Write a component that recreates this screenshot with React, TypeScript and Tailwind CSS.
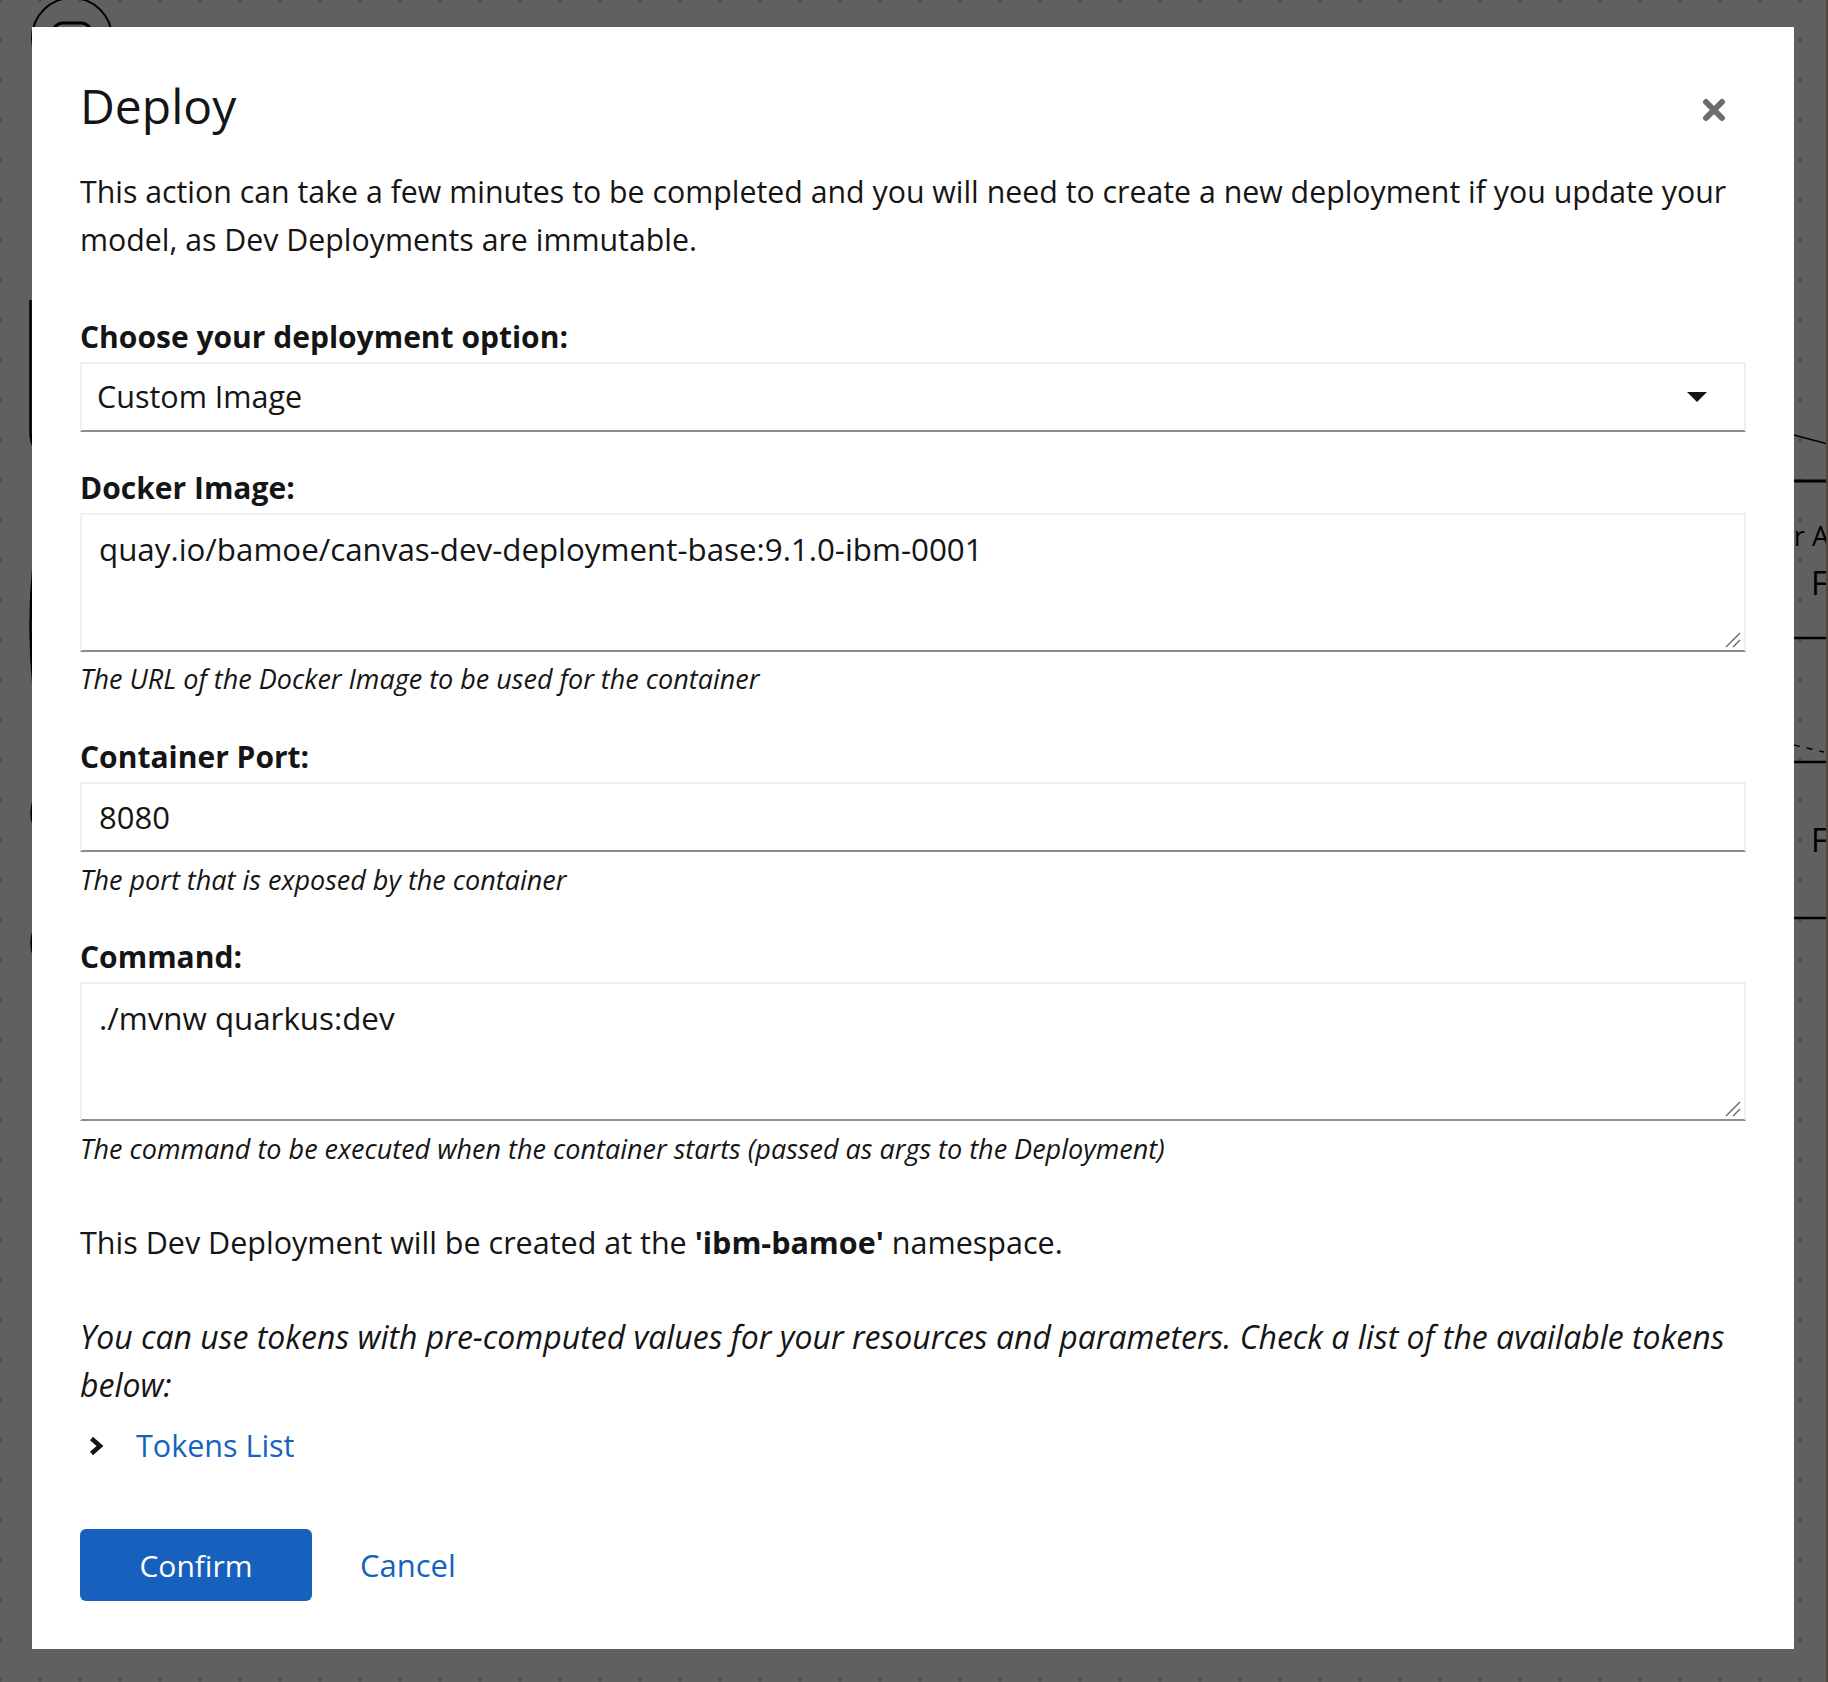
import React from "react";

const text = "text-[#151515]";

function Backdrop() {
  // diagram canvas that peeks out around the modal
  return (
    <svg className="absolute inset-0" width={1828} height={1682} viewBox="0 0 1828 1682">
      <circle cx={72} cy={38} r={40} fill="none" stroke="#000" strokeWidth={2} />
      <rect x={53} y={23} width={38} height={38} rx={10} fill="none" stroke="#000" strokeWidth={3} />
      <path d="M30.5 300 L30.5 430 Q30.5 442 34 447" fill="none" stroke="#000" strokeWidth={2.5} />
      <path d="M34 559 Q27 626 34 693" fill="none" stroke="#000" strokeWidth={2.5} />
      <path d="M34 800 Q29 813 34 826" fill="none" stroke="#000" strokeWidth={2.5} />
      <path d="M34 930 Q29 943 34 956" fill="none" stroke="#000" strokeWidth={2.5} />
      <line x1={1790} y1={434} x2={1828} y2={444} stroke="#000" strokeWidth={1.5} />
      <line x1={1790} y1={481} x2={1828} y2={481} stroke="#000" strokeWidth={3} />
      <text x={1829} y={546} textAnchor="end" fontSize={27} fontFamily="'Open Sans', sans-serif" fill="#000">
        Order A
      </text>
      <text x={1811} y={595} fontSize={32} fontFamily="'Open Sans', sans-serif" fill="#000">
        F
      </text>
      <line x1={1790} y1={638} x2={1828} y2={638} stroke="#000" strokeWidth={2.5} />
      <path d="M1794 745 L1824 752" fill="none" stroke="#000" strokeWidth={1.5} strokeDasharray="6 7" />
      <line x1={1790} y1={762} x2={1828} y2={762} stroke="#000" strokeWidth={2.5} />
      <text x={1811} y={852} fontSize={32} fontFamily="'Open Sans', sans-serif" fill="#000">
        F
      </text>
      <line x1={1790} y1={918} x2={1828} y2={918} stroke="#000" strokeWidth={2.5} />
      <rect x={1826} y={0} width={2} height={1682} fill="#54463a" />
    </svg>
  );
}

function Label({ children }: { children: React.ReactNode }) {
  return <div className={`h-[48px] leading-[48px] text-[30px] font-bold ${text}`}>{children}</div>;
}

function Helper({ children, mt = "mt-[7px]" }: { children: React.ReactNode; mt?: string }) {
  return <div className={`${mt} h-[42px] leading-[42px] text-[27px] italic ${text}`}>{children}</div>;
}

function Grip() {
  return (
    <svg className="absolute right-[3px] bottom-[2px]" width={16} height={16} viewBox="0 0 16 16">
      <line x1={1} y1={15} x2={15} y2={1} stroke="#6b6b6b" strokeWidth={1.5} />
      <line x1={8} y1={15} x2={15} y2={8} stroke="#6b6b6b" strokeWidth={1.5} />
    </svg>
  );
}

function TextArea({ value }: { value: string }) {
  return (
    <div className="relative mt-[1px] h-[139px] border-2 border-[#f0f0f0] border-b-[#8a8d90] pl-[17px] pt-[10px]">
      <div className={`leading-[48px] text-[31.3px] ${text}`}>{value}</div>
      <Grip />
    </div>
  );
}

export default function App() {
  return (
    <div className="relative w-[1828px] h-[1682px] overflow-hidden bg-[#606060] pl-[32px] pt-[27px] font-['Open_Sans',sans-serif]">
      <div className="absolute inset-0 bg-[radial-gradient(circle,#454545_1.3px,transparent_1.8px)] bg-[length:40px_40px] bg-[position:-20px_-20px]" />
      <Backdrop />

      <div className="relative w-[1762px] h-[1622px] bg-white px-12 pt-[48px]">
        <div className="h-[62px] flex items-start justify-between">
          <h1 className={`leading-[62px] text-[48px] font-medium ${text}`}>Deploy</h1>
          <button className="mt-[3px] w-[64px] h-[64px] flex items-center justify-center">
            <svg width={24} height={24} viewBox="0 0 24 24">
              <path d="M4 4 L20 20 M20 4 L4 20" stroke="#6a6e73" strokeWidth={6} strokeLinecap="round" />
            </svg>
          </button>
        </div>

        <p className={`mt-[31px] leading-[48px] text-[30.3px] ${text}`}>
          This action can take a few minutes to be completed and you will need to create a new deployment if you update your
          model, as Dev Deployments are immutable.
        </p>

        <div className="mt-[49px]">
          <Label>Choose your deployment option:</Label>
          <div className="mt-[1px] h-[70px] border-2 border-[#f0f0f0] border-b-[#8a8d90] pl-[15px] pr-[37px] flex items-center justify-between">
            <span className={`text-[30.5px] ${text}`}>Custom Image</span>
            <svg width={20} height={10} viewBox="0 0 20 10">
              <path d="M0 0 H20 L10 10 Z" fill="#151515" />
            </svg>
          </div>
        </div>

        <div className="mt-[32px]">
          <Label>Docker Image:</Label>
          <TextArea value="quay.io/bamoe/canvas-dev-deployment-base:9.1.0-ibm-0001" />
          <Helper mt="mt-[6px]">The URL of the Docker Image to be used for the container</Helper>
        </div>

        <div className="mt-[33px]">
          <Label>Container Port:</Label>
          <div className="mt-[1px] h-[70px] border-2 border-[#f0f0f0] border-b-[#8a8d90] pl-[17px] flex items-center">
            <span className={`text-[31px] ${text}`}>8080</span>
          </div>
          <Helper>The port that is exposed by the container</Helper>
        </div>

        <div className="mt-[32px]">
          <Label>Command:</Label>
          <TextArea value="./mvnw quarkus:dev" />
          <Helper>The command to be executed when the container starts (passed as args to the Deployment)</Helper>
        </div>

        <p className={`mt-[48px] leading-[48px] text-[30.5px] ${text}`}>
          This Dev Deployment will be created at the <b className="font-bold">'ibm-bamoe'</b> namespace.
        </p>

        <p className={`mt-[47px] leading-[48px] text-[32px] italic ${text}`}>
          You can use tokens with pre-computed values for your resources and parameters. Check a list of the available tokens
          below:
        </p>

        <div className="mt-[13px] h-[48px] flex items-center">
          <svg className="ml-[8px]" width={16} height={20} viewBox="0 0 16 20">
            <path d="M3.5 2.5 L12 10 L3.5 17.5" fill="none" stroke="#151515" strokeWidth={4.5} strokeLinejoin="miter" />
          </svg>
          <span className="ml-[32px] text-[30.5px] text-[#1563c1]">Tokens List</span>
        </div>

        <div className="mt-[59px] flex items-center gap-[48px]">
          <button className="w-[232px] h-[72px] rounded-[6px] bg-[#1860bd] text-white text-[30px]">Confirm</button>
          <button className="text-[31px] text-[#1563c1]">Cancel</button>
        </div>
      </div>
    </div>
  );
}
